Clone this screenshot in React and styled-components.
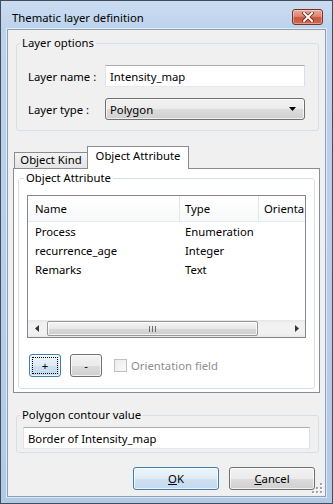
import React from 'react';
import styled, { createGlobalStyle } from 'styled-components';

const GlobalStyle = createGlobalStyle`
  html, body { margin: 0; padding: 0; background: #fff; }
  body { font-family: "Noto Sans", "Liberation Sans", sans-serif; font-size: 11.3px; }
  * { box-sizing: border-box; }
`;

const Window = styled.div`
  width: 333px;
  height: 504px;
  border: 1px solid #3f4d5c;
  background: linear-gradient(to bottom, #cadcf1 0px, #bdd3ec 28px, #b3cae7 100%);
  display: flex;
  flex-direction: column;
  color: #000;
`;

const TitleBar = styled.div`
  height: 28px;
  display: flex;
  align-items: flex-start;
  justify-content: space-between;
  padding: 9px 9px 0 11px;
`;

const Title = styled.div`
  line-height: 16px;
`;

const CloseButton = styled.div`
  width: 31px;
  height: 16px;
  margin-top: -1px;
  border: 1px solid #7c3326;
  border-radius: 3px;
  background: linear-gradient(to bottom, #eaa998 0%, #dc8671 45%, #c9553e 55%, #d26a50 100%);
  box-shadow: inset 0 0 0 1px rgba(255, 255, 255, 0.35);
  display: flex;
  align-items: center;
  justify-content: center;
`;

const Client = styled.div`
  position: relative;
  flex: 1;
  margin: 0 6px 6px 6px;
  border: 1px solid #8c9fb5;
  box-shadow: 0 0 0 1px rgba(255, 255, 255, 0.55);
  background: #f0f0f0;
  padding: 5px 6px 0 8px;
  display: flex;
  flex-direction: column;
`;

const GroupBox = styled.fieldset`
  margin: 0;
  margin-top: ${p => p.$top || 0}px;
  padding: 0;
  min-width: 0;
  border: 1px solid #d5dfe5;
  border-radius: 3px;
`;

const Legend = styled.legend`
  margin-left: ${p => p.$indent}px;
  padding: 0 2px;
  line-height: 16px;
`;

const GroupBody = styled.div`
  padding: ${p => p.$pad};
  display: flex;
  flex-direction: column;
  gap: ${p => p.$gap || 0}px;
`;

const FieldRow = styled.div`
  display: flex;
  align-items: center;
`;

const Label = styled.div`
  width: 77px;
`;

const TextBox = styled.div`
  flex: 1 0 auto;
  height: 22px;
  border: 1px solid;
  border-color: #abadb3 #dbdfe6 #e3e9ef #e2e3ea;
  background: #fff;
  padding: 0 4px;
  display: flex;
  align-items: center;
`;

const ComboBox = styled.div`
  flex: 1 0 auto;
  height: 22px;
  border: 1px solid #707070;
  border-radius: 3px;
  background: linear-gradient(to bottom, #f2f2f2 0%, #ebebeb 50%, #dddddd 50%, #cfcfcf 100%);
  box-shadow: inset 0 0 0 1px rgba(255, 255, 255, 0.7);
  padding: 0 8px 0 4px;
  display: flex;
  align-items: center;
  justify-content: space-between;
`;

const TabStrip = styled.div`
  position: relative;
  z-index: 2;
  margin: 15px 0 0 -2px;
  height: 23px;
  display: flex;
  align-items: flex-start;
`;

const Tab = styled.div`
  width: ${p => p.$w}px;
  text-align: center;
  white-space: nowrap;
  border: 1px solid #898c95;
  border-bottom: none;
  ${p => p.$active
    ? `height: 23px; padding-top: 1px; line-height: 16px; background: #fff;`
    : `height: 16px; margin-top: 6px; border-right: none; line-height: 13px;
       background: linear-gradient(to bottom, #f3f3f3, #e4e4e4);`}
`;

const TabPanel = styled.div`
  position: relative;
  z-index: 1;
  margin: -1px -1px 0 -3px;
  border: 1px solid #898c95;
  background: #fff;
  padding: 1px 4px 3px 4px;
`;

const ListView = styled.div`
  height: 143px;
  border: 1px solid #828790;
  background: #fff;
  display: flex;
  flex-direction: column;
  overflow: hidden;
`;

const ListRow = styled.div`
  display: flex;
  flex: none;
  height: ${p => (p.$header ? 26 : 19)}px;
  padding-left: 2px;
  white-space: nowrap;
  ${p => p.$header && `background: linear-gradient(to bottom, #ffffff, #f7f8f9); border-bottom: 1px solid #eaeaea;`}
`;

const Cell = styled.div`
  flex: none;
  width: ${p => p.$w}px;
  padding-left: 5px;
  display: flex;
  align-items: center;
  overflow: hidden;
  ${p => p.$header && p.$divider && `border-right: 1px solid #e3e5e7;`}
`;

const Spacer = styled.div`
  flex: 1;
`;

const HScroll = styled.div`
  flex: none;
  height: 17px;
  display: flex;
  align-items: center;
  background: linear-gradient(to bottom, #e6e6e6 0%, #f1f1f1 20%, #f1f1f1 80%, #e9e9e9 100%);
`;

const ScrollArrow = styled.div`
  width: 17px;
  height: 17px;
  flex: none;
  display: flex;
  align-items: center;
  justify-content: center;
`;

const Thumb = styled.div`
  margin-left: 2px;
  width: 211px;
  height: 15px;
  border: 1px solid #979797;
  border-radius: 2px;
  background: linear-gradient(to bottom, #f4f4f4 0%, #e8e8e8 50%, #d9d9d9 51%, #cdcdcd 100%);
  box-shadow: inset 0 0 0 1px rgba(255, 255, 255, 0.75);
  display: flex;
  align-items: center;
  justify-content: center;
`;

const ButtonRow = styled.div`
  margin-top: 16px;
  padding-left: 2px;
  display: flex;
  align-items: center;
  gap: 9px;
`;

const Button = styled.div`
  position: relative;
  width: ${p => p.$w}px;
  height: 23px;
  border-radius: 3px;
  border: 1px solid ${p => (p.$default ? '#3c7fb1' : '#707070')};
  background: ${p => p.$default
    ? 'linear-gradient(to bottom, #eef5fb 0%, #dfebf5 50%, #cfe2f1 50%, #c3daec 100%)'
    : 'linear-gradient(to bottom, #f2f2f2 0%, #ebebeb 50%, #dddddd 50%, #cfcfcf 100%)'};
  box-shadow: inset 0 0 0 1px rgba(255, 255, 255, 0.7);
  display: flex;
  align-items: center;
  justify-content: center;
  ${p => p.$focus && `
    &::after {
      content: '';
      position: absolute;
      inset: 2px;
      border: 1px dotted #000;
    }
  `}
`;

const CheckBox = styled.div`
  width: 13px;
  height: 13px;
  margin-left: 3px;
  border: 1px solid #c0c0c0;
  background: linear-gradient(to bottom right, #ececec, #fafafa);
`;

const DisabledText = styled.span`
  margin-left: -5px;
  color: #8e8e8e;
`;

const Footer = styled.div`
  margin-top: 14px;
  padding-right: 4px;
  display: flex;
  justify-content: flex-end;
  gap: 10px;
`;

const Grip = styled.svg`
  position: absolute;
  right: 2px;
  bottom: 2px;
`;

function Arrow({ dir }) {
  const pts = {
    left: '5,0 5,7 1,3.5',
    right: '1,0 1,7 5,3.5',
  }[dir];
  return (
    <svg width="6" height="7" viewBox="0 0 6 7">
      <polygon points={pts} fill="#333" />
    </svg>
  );
}

const columns = [150, 79, 60];
const rows = [
  ['Process', 'Enumeration', ''],
  ['recurrence_age', 'Integer', ''],
  ['Remarks', 'Text', ''],
];

export default function App() {
  return (
    <>
      <GlobalStyle />
      <Window>
        <TitleBar>
          <Title>Thematic layer definition</Title>
          <CloseButton>
            <svg width="12" height="10" viewBox="0 0 12 10">
              <path d="M2 1 L10 9 M10 1 L2 9" stroke="#5a1c12" strokeWidth="3.4" strokeLinecap="square" />
              <path d="M2 1 L10 9 M10 1 L2 9" stroke="#fff" strokeWidth="2" strokeLinecap="square" />
            </svg>
          </CloseButton>
        </TitleBar>

        <Client>
          <GroupBox>
            <Legend $indent={3}>Layer options</Legend>
            <GroupBody $pad="14px 13px 10px 11px" $gap={11}>
              <FieldRow>
                <Label>Layer name :</Label>
                <TextBox>Intensity_map</TextBox>
              </FieldRow>
              <FieldRow>
                <Label>Layer type :</Label>
                <ComboBox>
                  <span>Polygon</span>
                  <svg width="7" height="4" viewBox="0 0 7 4">
                    <polygon points="0,0 7,0 3.5,4" fill="#000" />
                  </svg>
                </ComboBox>
              </FieldRow>
            </GroupBody>
          </GroupBox>

          <TabStrip>
            <Tab $w={73}>Object Kind</Tab>
            <Tab $w={102} $active>Object Attribute</Tab>
          </TabStrip>
          <TabPanel>
            <GroupBox>
              <Legend $indent={5}>Object Attribute</Legend>
              <GroupBody $pad="9px 8px 11px 8px">
                <ListView>
                  <ListRow $header>
                    <Cell $w={columns[0]} $header $divider>Name</Cell>
                    <Cell $w={columns[1]} $header $divider>Type</Cell>
                    <Cell $w={columns[2]} $header>Orienta</Cell>
                  </ListRow>
                  {rows.map(r => (
                    <ListRow key={r[0]}>
                      <Cell $w={columns[0]}>{r[0]}</Cell>
                      <Cell $w={columns[1]}>{r[1]}</Cell>
                      <Cell $w={columns[2]}>{r[2]}</Cell>
                    </ListRow>
                  ))}
                  <Spacer />
                  <HScroll>
                    <ScrollArrow><Arrow dir="left" /></ScrollArrow>
                    <Thumb>
                      <svg width="7" height="6" viewBox="0 0 7 6">
                        <path d="M0.5 0 V6 M3.5 0 V6 M6.5 0 V6" stroke="#6b6b6b" strokeWidth="1" />
                      </svg>
                    </Thumb>
                    <Spacer />
                    <ScrollArrow><Arrow dir="right" /></ScrollArrow>
                  </HScroll>
                </ListView>
                <ButtonRow>
                  <Button $w={32} $default $focus>+</Button>
                  <Button $w={32}>-</Button>
                  <CheckBox />
                  <DisabledText>Orientation field</DisabledText>
                </ButtonRow>
              </GroupBody>
            </GroupBox>
          </TabPanel>

          <GroupBox $top={14}>
            <Legend $indent={3}>Polygon contour value</Legend>
            <GroupBody $pad="4px 8px 3px 6px">
              <TextBox>Border of Intensity_map</TextBox>
            </GroupBody>
          </GroupBox>

          <Footer>
            <Button $w={86} $default><span><u>O</u>K</span></Button>
            <Button $w={86}><span><u>C</u>ancel</span></Button>
          </Footer>

          <Grip width="11" height="11" viewBox="0 0 11 11">
            {[[9, 1], [9, 5], [5, 5], [9, 9], [5, 9], [1, 9]].map(([x, y]) => (
              <g key={`${x}-${y}`}>
                <rect x={x} y={y} width="2" height="2" fill="#fff" />
                <rect x={x - 1} y={y - 1} width="2" height="2" fill="#a3a3a3" />
              </g>
            ))}
          </Grip>
        </Client>
      </Window>
    </>
  );
}
